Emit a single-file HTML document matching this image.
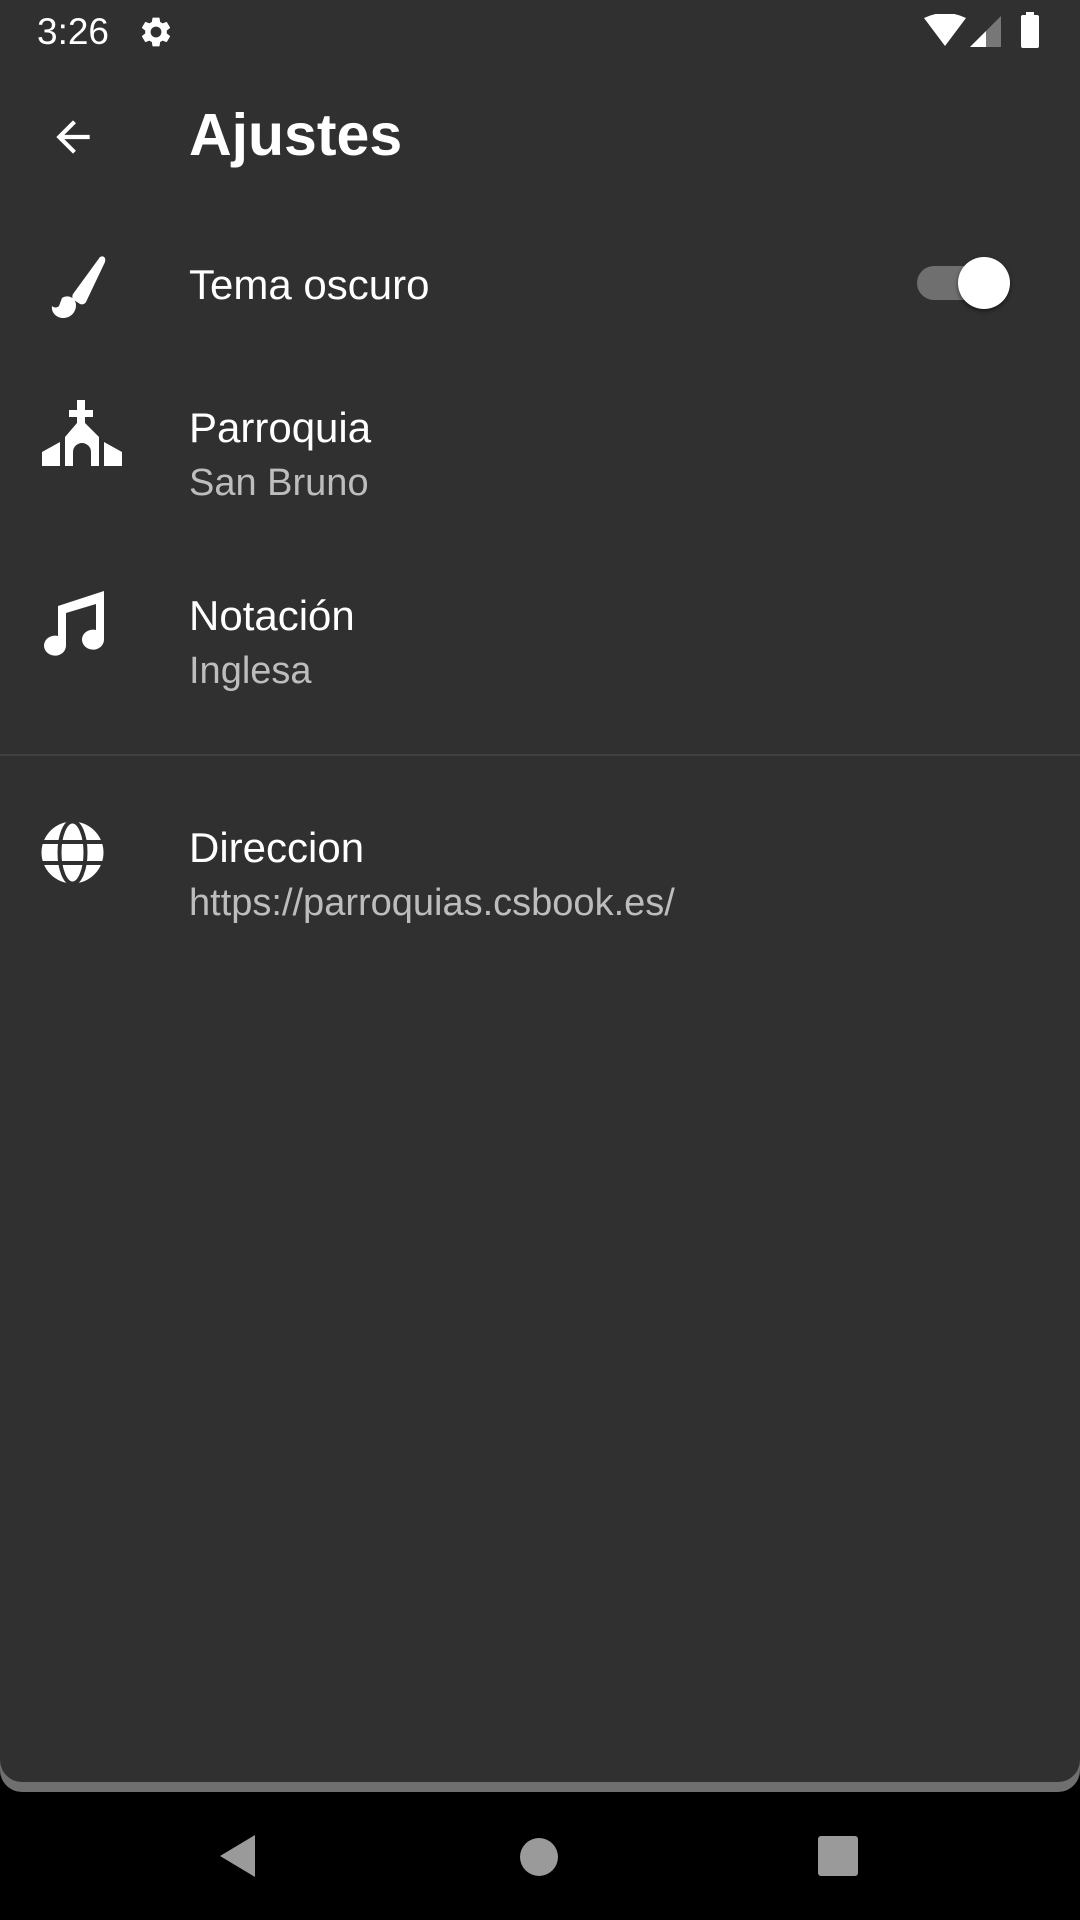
<!DOCTYPE html>
<html><head><meta charset="utf-8"><style>
*{margin:0;padding:0;box-sizing:border-box}
body{width:1080px;height:1920px;background:#000;font-family:"Liberation Sans",Roboto,sans-serif;position:relative;overflow:hidden;color:#fff}
.panel{position:absolute;left:0;top:0;width:1080px;height:1792px;background:#6f6f6f;border-radius:0 0 22px 22px}
.inner{position:absolute;left:0;top:0;width:1080px;height:1782px;background:#303030;border-radius:0 0 22px 22px}
.t{position:absolute;white-space:nowrap;line-height:1}
.title{font-size:42px;color:#fff}
.sub{font-size:38px;color:#bdbdbd}
svg{position:absolute}
</style></head><body>
<div class="panel"></div><div class="inner"></div>
<div class="t" style="left:37px;top:13px;font-size:37px">3:26</div>
<svg style="left:138px;top:14px" width="36" height="36" viewBox="0 0 24 24"><path fill="#fff" d="M19.14 12.94c.04-.3.06-.61.06-.94 0-.32-.02-.64-.07-.94l2.03-1.58a.49.49 0 0 0 .12-.61l-1.920-3.32a.49.49 0 0 0-.59-.22l-2.39.96c-.5-.38-1.030-.7-1.62-.94l-.36-2.54a.48.48 0 0 0-.48-.41h-3.840a.47.47 0 0 0-.47.41l-.36 2.54c-.59.24-1.13.57-1.62.94l-2.39-.96a.48.48 0 0 0-.59.22L2.74 8.87a.47.47 0 0 0 .12.61l2.03 1.58c-.05.3-.09.63-.09.94s.02.64.07.94l-2.03 1.58a.49.49 0 0 0-.12.61l1.92 3.32c.12.22.37.29.59.22l2.39-.96c.5.38 1.03.7 1.62.94l.36 2.54c.05.24.24.41.48.41h3.84c.24 0 .44-.17.47-.41l.36-2.54c.59-.24 1.13-.56 1.62-.94l2.39.96c.22.08.47 0 .59-.22l1.92-3.32a.47.47 0 0 0-.12-.61l-2.01-1.58zM12 15.6A3.6 3.6 0 1 1 12 8.4a3.6 3.6 0 0 1 0 7.2z"/></svg>
<svg style="left:922px;top:14px" width="46" height="36" viewBox="0 0 46 36"><path fill="#fff" d="M2 4 Q23 -6 44 4 L23 32 Z"/></svg>
<svg style="left:970px;top:14px" width="32" height="34" viewBox="0 0 32 34"><path fill="#fff" d="M0 33 L16 17 L16 33 Z"/><path fill="#777" d="M16 17 L31 2 L31 33 L16 33Z"/></svg>
<svg style="left:1020px;top:12px" width="22" height="36" viewBox="0 0 22 36"><rect x="6" y="0" width="8" height="4" fill="#fff"/><rect x="1" y="3" width="18" height="33" rx="2" fill="#fff"/></svg>
<svg style="left:48px;top:112px" width="50" height="50" viewBox="0 0 24 24"><path fill="#fff" d="M20 11H7.83l5.59-5.59L12 4l-8 8 8 8 1.41-1.41L7.83 13H20v-2z"/></svg>
<div class="t" style="left:189px;top:106px;font-size:59px;font-weight:bold">Ajustes</div>
<svg style="left:40px;top:254px" width="68" height="68" viewBox="0 0 68 68"><path fill="#fff" d="M60 3c4-2 6 1 5 5L46 48c-1 2-4 3-6 2l-6-4c-2-1-2-4-1-6z"/><path fill="#fff" d="M22 44c6-4 14 0 14 7 0 8-6 13-13 13-6 0-12-5-11-12 2 2 5 2 7 0z"/></svg>
<div class="t title" style="left:189px;top:264px">Tema oscuro</div>
<div style="position:absolute;left:917px;top:266px;width:76px;height:34px;border-radius:17px;background:#6f6f6f"></div>
<div style="position:absolute;left:958px;top:257px;width:52px;height:52px;border-radius:50%;background:#fff;box-shadow:0 2px 4px rgba(0,0,0,.5)"></div>
<svg style="left:40px;top:400px" width="84" height="66" viewBox="0 0 84 66"><path fill="#fff" d="M37 0h8v10h8v7h-8v6l14 14v29H51V52a9 9 0 0 0-18 0v14H25V37l12-14v-6h-8v-7h8z"/><path fill="#fff" d="M20 42v24H2V52z M64 42v24h18V52z"/></svg>
<div class="t title" style="left:189px;top:407px">Parroquia</div>
<div class="t sub" style="left:189px;top:464px">San Bruno</div>
<svg style="left:40px;top:588px" width="68" height="70" viewBox="0 0 68 70"><path fill="#fff" d="M18 18 L64 3 V52 a11 10 0 1 1 -8 -10 V16 L26 25 V58 a11 10 0 1 1 -8 -10 Z"/></svg>
<div class="t title" style="left:189px;top:595px">Notación</div>
<div class="t sub" style="left:189px;top:652px">Inglesa</div>
<div style="position:absolute;left:0;top:754px;width:1080px;height:2px;background:#414141"></div>
<svg style="left:41px;top:821px" width="63" height="63" viewBox="0 0 63 63"><circle cx="31.5" cy="31.5" r="31" fill="#fff"/><ellipse cx="31.5" cy="31.5" rx="13" ry="31" fill="none" stroke="#303030" stroke-width="4"/><rect x="0" y="19" width="63" height="4" fill="#303030"/><rect x="0" y="40" width="63" height="4" fill="#303030"/></svg>
<div class="t title" style="left:189px;top:827px">Direccion</div>
<div class="t sub" style="left:189px;top:884px">https://parroquias.csbook.es/</div>
<svg style="left:218px;top:1834px" width="40" height="44" viewBox="0 0 40 44"><path fill="#9a9a9a" d="M37 1 L37 43 L2 22 Z"/></svg>
<div style="position:absolute;left:520px;top:1838px;width:38px;height:38px;border-radius:50%;background:#9a9a9a"></div>
<div style="position:absolute;left:818px;top:1836px;width:40px;height:40px;border-radius:3px;background:#9a9a9a"></div>
</body></html>
